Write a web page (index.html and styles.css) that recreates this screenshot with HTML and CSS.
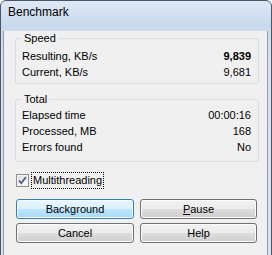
FILE: index.html
```html
<!DOCTYPE html>
<html>
<head>
<meta charset="utf-8">
<link rel="stylesheet" href="styles.css">
</head>
<body>
<div class="window">
  <div class="titlebar"><span class="title">Benchmark</span></div>
  <div class="client">
    <fieldset class="group speed">
      <legend>Speed</legend>
      <div class="row"><span>Resulting, KB/s</span><span class="bold">9,839</span></div>
      <div class="row"><span>Current, KB/s</span><span>9,681</span></div>
    </fieldset>
    <fieldset class="group total">
      <legend>Total</legend>
      <div class="row"><span>Elapsed time</span><span>00:00:16</span></div>
      <div class="row"><span>Processed, MB</span><span>168</span></div>
      <div class="row"><span>Errors found</span><span>No</span></div>
    </fieldset>
    <div class="check">
      <span class="box"><svg width="11" height="11" viewBox="0 0 11 11"><path d="M2 5.5 L4.3 8 L9 2" fill="none" stroke="#4a5f8f" stroke-width="1.8"/></svg></span>
      <span class="focus">Multithreading</span>
    </div>
    <div class="buttons">
      <button class="btn default">Background</button>
      <button class="btn"><u>P</u>ause</button>
      <button class="btn">Cancel</button>
      <button class="btn">Help</button>
    </div>
  </div>
</div>
</body>
</html>
```
FILE: styles.css
```css
* { box-sizing: border-box; }
html, body { margin: 0; padding: 0; background: #ffffff; }
body { font-family: "Liberation Sans", Arial, sans-serif; font-size: 11px; color: #000; }

.window {
  width: 272px;
  height: 262px;
  border: 1px solid #4a5566;
  border-radius: 6px 6px 0 0;
  background: linear-gradient(#dfe9f5 0px, #c9d9ec 23px, #d6e2ef 60px, #dbe5f1 255px);
  overflow: hidden;
}

.titlebar {
  height: 23px;
  display: flex;
  align-items: center;
  padding-left: 7px;
  padding-bottom: 2px;
  font-size: 12px;
  color: #000;
}

.client {
  margin: 0 3px 0 2px;
  height: 228px;
  background: #f0f0f0;
  border: 1px solid #8f9caf;
  border-top: none;
  padding: 0 8px 0 11px;
}

.group {
  margin: 0;
  border: 1px solid #d5dfe5;
  border-radius: 3px;
  padding: 3px 7px 3px 6px;
  min-width: 0;
}
.group legend {
  padding: 0 2px;
  line-height: 14px;
}
.speed { margin-top: 7px; }
.total { margin-top: 8px; padding-top: 1px; padding-bottom: 6px; }

.row {
  display: flex;
  justify-content: space-between;
  height: 16px;
  line-height: 16px;
}
.bold { font-weight: bold; }

.check {
  display: flex;
  align-items: center;
  margin-top: 10px;
  margin-left: 1px;
  height: 17px;
}
.box {
  width: 13px;
  height: 13px;
  border: 1px solid #8e8f8f;
  background: linear-gradient(135deg, #dcdcdc, #ffffff);
  display: flex;
  align-items: center;
  justify-content: center;
  box-shadow: inset 0 0 0 1px #f4f4f4;
  margin-right: 2px;
}
.box svg { display: block; }
.focus {
  border: 1px dotted #000;
  padding: 0 1px 0 1px;
  height: 17px;
  line-height: 15px;
}

.buttons {
  display: grid;
  grid-template-columns: 118px 117px;
  grid-auto-rows: 20px;
  column-gap: 6px;
  row-gap: 4px;
  margin-top: 10px;
  margin-left: 1px;
}
.btn {
  font-family: "Liberation Sans", Arial, sans-serif;
  font-size: 11px;
  color: #000;
  border: 1px solid #707070;
  border-radius: 3px;
  background: linear-gradient(#f2f2f2 0%, #ebebeb 50%, #dddddd 50%, #cfcfcf 100%);
  box-shadow: inset 0 0 0 1px #fbfbfb;
  padding: 0;
  margin: 0;
}
.btn.default {
  border-color: #3c7fb1;
  background: linear-gradient(#eaf6fd 0%, #d9f0fc 50%, #bee6fd 50%, #a7d9f5 100%);
  box-shadow: inset 0 0 0 1px #f3fbfe;
}
.btn u { text-decoration: underline; }
```
